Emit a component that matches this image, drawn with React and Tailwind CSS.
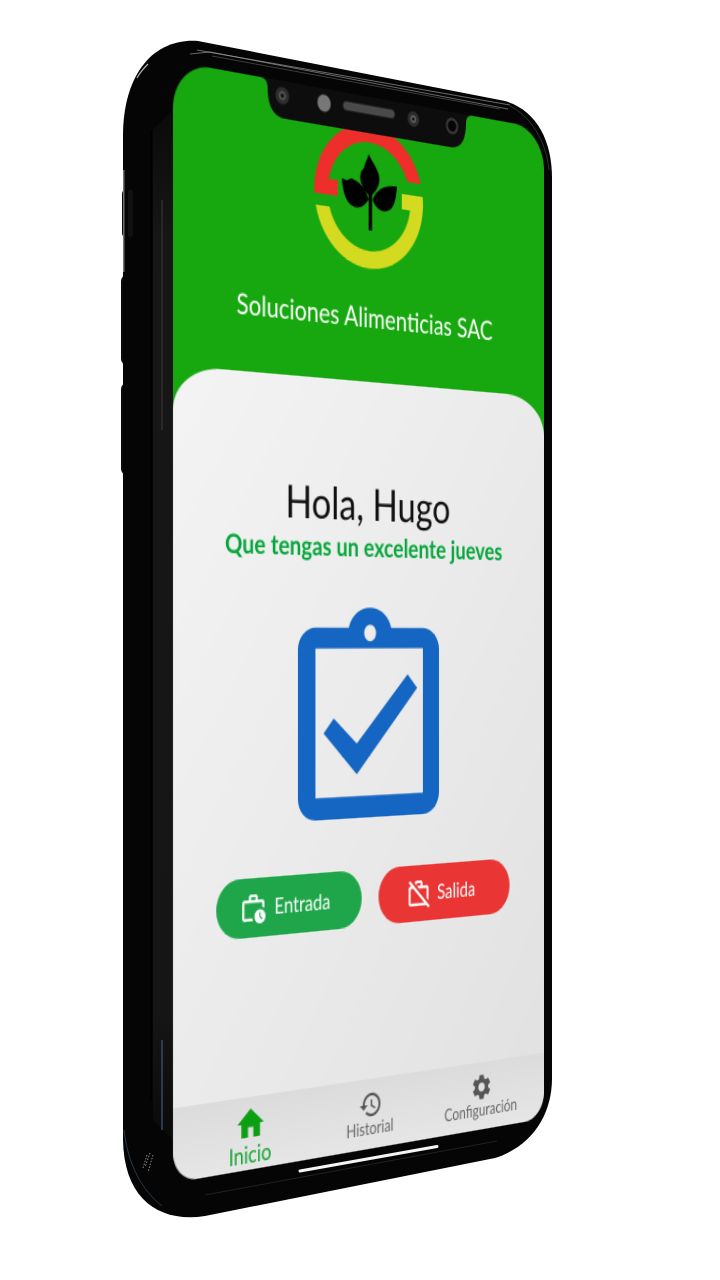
import React from "react";
import { MdHome, MdHistory, MdSettings, MdOutlineWorkHistory, MdOutlineWorkOff } from "react-icons/md";

const W = 375, H = 812;
function planeMatrix(q) {
  const [[x0, y0], [x1, y1], [x2, y2], [x3, y3]] = q;
  const dx1 = x1 - x2, dx2 = x3 - x2, dx3 = x0 - x1 + x2 - x3;
  const dy1 = y1 - y2, dy2 = y3 - y2, dy3 = y0 - y1 + y2 - y3;
  const den = dx1 * dy2 - dx2 * dy1;
  const g = (dx3 * dy2 - dx2 * dy3) / den;
  const h = (dx1 * dy3 - dx3 * dy1) / den;
  const a = x1 - x0 + g * x1, b = x3 - x0 + h * x3;
  const d = y1 - y0 + g * y1, e = y3 - y0 + h * y3;
  return `matrix3d(${[a / W, d / W, 0, g / W, b / H, e / H, 0, h / H, 0, 0, 1, 0, x0, y0, 0, 1].join(",")})`;
}
const screenTransform = planeMatrix([[173, 61], [544, 129], [544, 1118.5], [173, 1183]]);

function PhoneBody() {
  return (
    <svg className="absolute left-0 top-0" width="720" height="1280" viewBox="0 0 720 1280">
      <defs>
        <linearGradient id="strip" x1="0" x2="0" y1="0" y2="1">
          <stop offset="0" stopColor="#0a0a0a" />
          <stop offset="0.12" stopColor="#161616" />
          <stop offset="0.88" stopColor="#151515" />
          <stop offset="1" stopColor="#0a0a0a" />
        </linearGradient>
      </defs>
      {/* side buttons */}
      <rect x="122" y="190" width="12" height="47" rx="4" fill="#0a0a0a" />
      <rect x="121" y="275" width="16" height="90" rx="6" fill="#0c0c0c" />
      <rect x="121" y="383" width="16" height="92" rx="6" fill="#0c0c0c" />
      {/* outer silhouette */}
      <path d="M123 136 C123 76 152 38 198 41 L505 101 C536 110 552 140 552 178 L552 1078 C552 1115 532 1146 495 1158 L205 1216 C160 1223 124 1200 123 1140 Z" fill="#050505" />
      <path d="M123 170 L124.5 170 L124.5 272 L123 272 Z" fill="#6a7278" />
      <rect x="128" y="190" width="5" height="47" rx="2.5" fill="#111" />
      <path d="M137 78 C140 72 144 68 148 64" fill="none" stroke="#d8d8d8" strokeWidth="1.2" opacity="0.8" />
      {/* front bezel */}
      <path d="M153 130 L173 110 L173 1140 L153 1120 Z" fill="url(#strip)" />
      <path d="M197 50 L510 105" stroke="#8d8d8d" strokeWidth="1" opacity="0.75" />
      <path d="M190 54 L210 52 L508 109" fill="none" stroke="#a8a8a8" strokeWidth="1" opacity="0.6" />
      <path d="M212 56 L500 109" stroke="#3d3d3d" strokeWidth="1" />
      <path d="M510 106 C530 116 546 140 549 170" fill="none" stroke="#444" strokeWidth="1" opacity="0.7" />
      <path d="M151 130 L151 1100" stroke="#000" strokeWidth="2" />
      <path d="M162 200 L162 430" stroke="#3a3530" strokeWidth="1.5" opacity="0.8" />
      <path d="M162 1040 L162 1130" stroke="#5f7f9f" strokeWidth="1" opacity="0.8" />
      <path d="M124 1130 C128 1165 142 1190 162 1206" fill="none" stroke="#33465c" strokeWidth="1" opacity="0.8" />
      <path d="M205 1195 L497 1141" stroke="#222" strokeWidth="1" />
      {/* speaker holes */}
      <path d="M150 1153 L145 1167 M147 1155 L143 1168 M153 1155 L148 1172" stroke="#8b8b8b" strokeWidth="1" strokeDasharray="1.5 1.5" />
      {/* home indicator */}
      <path d="M300 1171 L437 1146.5" stroke="#f5f5f5" strokeWidth="3" strokeLinecap="round" />
    </svg>
  );
}

function Notch() {
  return (
    <div className="absolute left-[80px] top-0 h-[30px] w-[215px]">
      <svg width="215" height="30" viewBox="0 0 215 30">
        <path d="M0 0 C5 0 7 3 7 7 C7 20 12 28 24 28 L191 28 C203 28 208 20 208 7 C208 3 210 0 215 0 Z" fill="#0d0d0d" />
        <circle cx="21" cy="11" r="6.5" fill="#2d2d2d" />
        <circle cx="21" cy="11" r="3.5" fill="#555" />
        <circle cx="21" cy="11" r="1.6" fill="#111" />
        <circle cx="61.5" cy="11" r="6.5" fill="#777" />
        <rect x="80" y="6.5" width="53" height="7" rx="3.5" fill="#4a4a4a" stroke="#222" />
        <circle cx="152" cy="11" r="6" fill="#2d2d2d" />
        <circle cx="152" cy="11" r="3" fill="#666" />
        <circle cx="152" cy="11" r="1.4" fill="#111" />
        <circle cx="193" cy="11" r="6.5" fill="#3a3a3a" />
        <circle cx="193" cy="11" r="4.5" fill="#050505" />
      </svg>
    </div>
  );
}

function Logo() {
  return (
    <svg className="mx-auto block" width="113" height="113" viewBox="131 21 113 113">
      <path d="M132 80 A55 55 0 0 1 239.6 61 L225.8 61 A42 42 0 0 0 146 68 L155 68 L155 80 Z" fill="#ee2e2b" />
      <path d="M133.3 89 A55 55 0 0 0 241.7 71 L220 71 L220 83 L228.6 83 A42 42 0 0 1 146.8 89 Z" fill="#d3da20" />
      <path d="M186 44 C188 48 193 52 196 58 C199 66 194 71 189 76 L186 76 C180 71 176 66 178 60 C179 56 181 58 182 53 C183 50 185 48 186 44 Z" fill="#000" />
      <path d="M159 66 L164 67 L168 65 C176 66 182 70 186 79 C182 85 176 88 170 86 C163 84 160 76 159 66 Z" fill="#000" />
      <path d="M215 66 C206 66 195 68 190 79 C193 85 199 88 205 86 C212 84 214 76 215 66 Z" fill="#000" />
      <rect x="186" y="70" width="3.4" height="33" fill="#000" />
    </svg>
  );
}

function Clipboard() {
  return (
    <svg className="mx-auto block" width="143" height="163" viewBox="0 0 143 165" preserveAspectRatio="none">
      <path
        fillRule="evenodd"
        fill="#1565c2"
        d="M50 17 A22 20 0 0 1 93 17 L126 17 A17 17 0 0 1 143 34 L143 148 A17 17 0 0 1 126 165 L17 165 A17 17 0 0 1 0 148 L0 34 A17 17 0 0 1 17 17 Z M17 33 L17 148 L126 148 L126 33 Z M71.5 14.5 A6 6.5 0 1 0 71.5 27.5 A6 6.5 0 1 0 71.5 14.5 Z"
      />
      <path d="M35 87 L58 107 L110 53.6 L120 64.5 L58 131 L25 98.5 Z" fill="#1565c2" />
    </svg>
  );
}

function ActionButton({ icon: Icon, label, bg }) {
  return (
    <button className={`flex h-[44px] w-[140px] items-center justify-center gap-[7px] rounded-full pr-[9px] text-[16px] text-white ${bg}`}>
      <Icon size={25} />
      <span>{label}</span>
    </button>
  );
}

function Tab({ icon: Icon, label, active }) {
  return (
    <div className={`flex flex-col items-center ${active ? "text-[#0fa52f]" : "text-[#555]"}`}>
      {active ? <Icon size={30} className="mt-[5px] text-[#0d9f12]" /> : <Icon size={24} className="mt-[8px]" />}
      <span className={active ? "mt-[-2px] text-[17px] leading-[20px]" : "mt-[-2px] whitespace-nowrap text-[13px] leading-[16px] text-[#666]"}>{label}</span>
    </div>
  );
}

export default function App() {
  return (
    <div className="relative h-[1280px] w-[720px] overflow-hidden bg-white" style={{ fontFamily: "Lato, 'Noto Sans', sans-serif" }}>
      <PhoneBody />
      <div
        className="absolute left-0 top-0 flex h-[812px] w-[375px] origin-top-left flex-col overflow-hidden rounded-t-[34px] rounded-b-[22px] bg-[#17a80f] blur-[0.3px]"
        style={{ transform: screenTransform }}
      >
        <Notch />
        <header className="h-[220px] shrink-0 pt-[21px] text-center">
          <Logo />
          <p className="mt-[22px] text-[21px] leading-[28px] text-white">Soluciones Alimenticias SAC</p>
        </header>
        <main className="flex flex-1 flex-col rounded-tl-[44px_32px] rounded-tr-[44px_32px] bg-linear-to-br from-[#f4f4f4] to-[#e1e1e1]">
          <div className="pt-[74px] text-center">
            <h1 className="text-[34px] font-normal leading-[40px] text-[#111]">Hola, Hugo</h1>
            <p className="text-[20px] font-bold leading-[26px] text-[#07a63c]">Que tengas un excelente jueves</p>
          </div>
          <div className="mt-[33px]">
            <Clipboard />
          </div>
          <div className="mt-[40px] flex justify-center gap-[17px]">
            <ActionButton icon={MdOutlineWorkHistory} label="Entrada" bg="bg-[#1fa64b]" />
            <ActionButton icon={MdOutlineWorkOff} label="Salida" bg="bg-[#e93634]" />
          </div>
          <nav className="mt-auto grid h-[54px] grid-cols-3 bg-linear-to-b from-[#dcdcdc] to-[#e6e6e6] px-3">
            <Tab icon={MdHome} label="Inicio" active />
            <Tab icon={MdHistory} label="Historial" />
            <Tab icon={MdSettings} label="Configuración" />
          </nav>
        </main>
      </div>
    </div>
  );
}
